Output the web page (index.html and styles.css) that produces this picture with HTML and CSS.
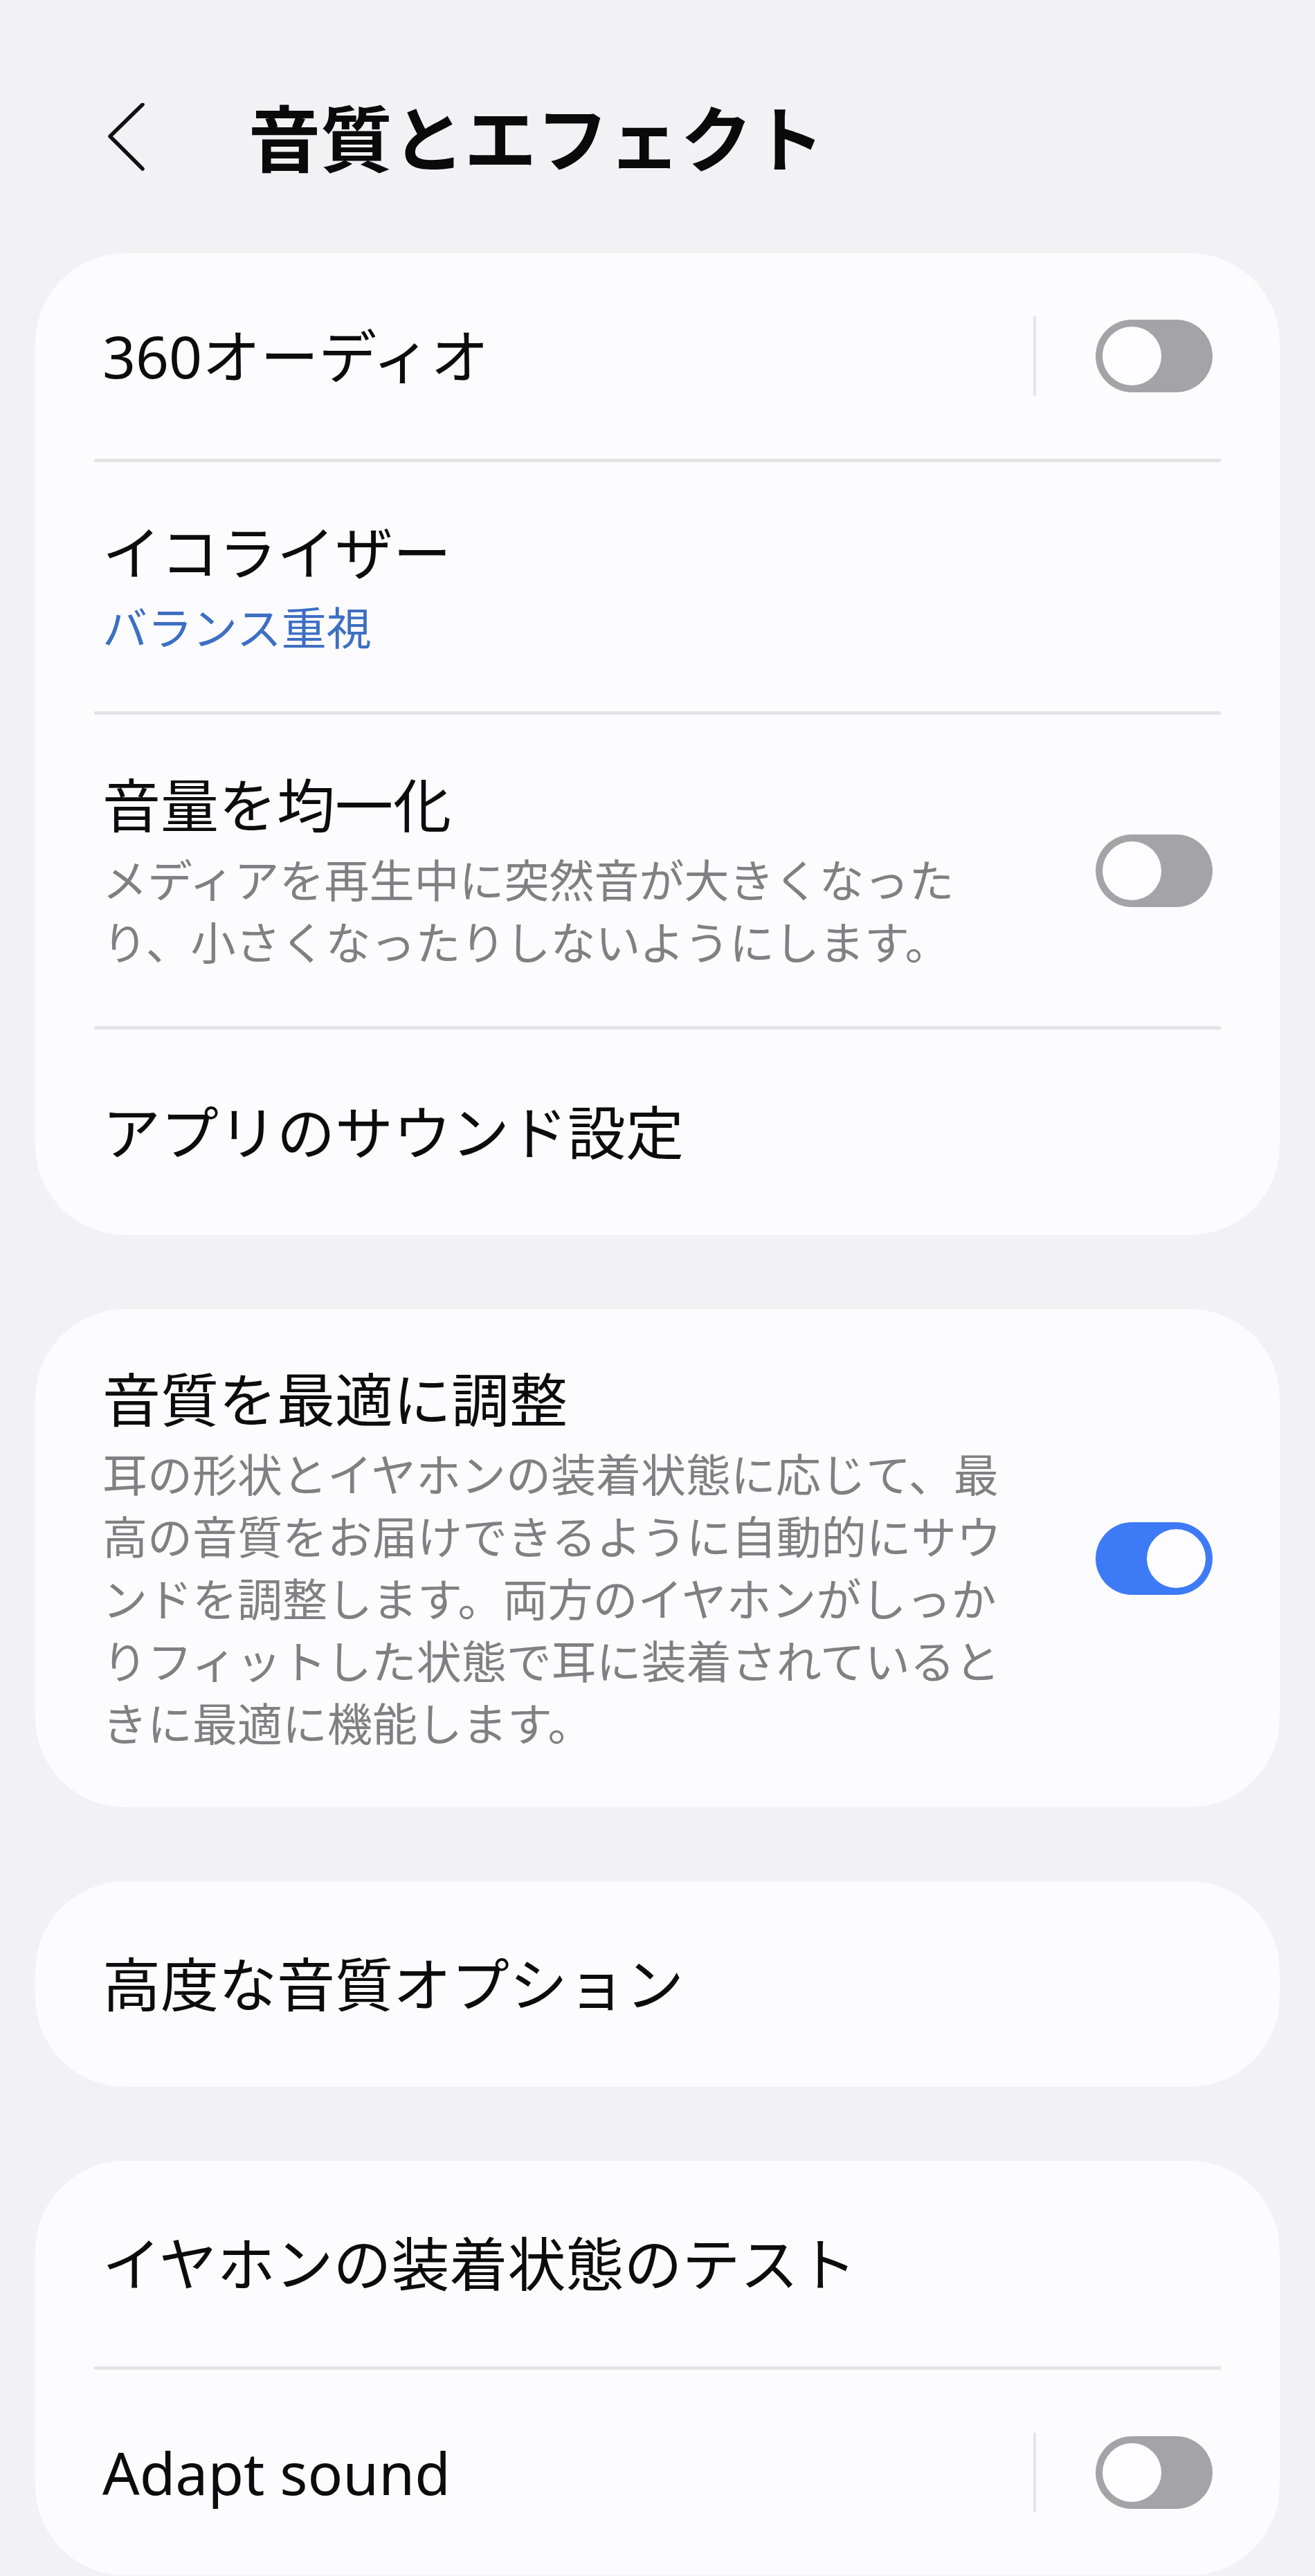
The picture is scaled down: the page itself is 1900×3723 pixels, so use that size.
FILE: index.html
```html
<!DOCTYPE html>
<html lang="ja">
<head>
<meta charset="utf-8">
<title>音質とエフェクト</title>
<link rel="stylesheet" href="styles.css">
</head>
<body>
<div class="page">
  <header class="appbar">
    <svg class="back" width="62" height="104" viewBox="0 0 62 104" aria-hidden="true">
      <path d="M54 2 L7 48 L54 95" fill="none" stroke="#111" stroke-width="5.5" stroke-linecap="round" stroke-linejoin="round"/>
    </svg>
    <h1 class="title">音質とエフェクト</h1>
  </header>

  <section class="card">
    <div class="row">
      <div class="text"><div class="label">360オーディオ</div></div>
      <div class="vdiv"></div>
      <div class="switch"><div class="knob"></div></div>
    </div>
    <div class="sep"></div>
    <div class="row">
      <div class="text">
        <div class="label">イコライザー</div>
        <div class="sub blue">バランス重視</div>
      </div>
    </div>
    <div class="sep"></div>
    <div class="row">
      <div class="text">
        <div class="label">音量を均一化</div>
        <div class="sub desc">メディアを再生中に突然音が大きくなったり、小さくなったりしないようにします。</div>
      </div>
      <div class="switch"><div class="knob"></div></div>
    </div>
    <div class="sep"></div>
    <div class="row">
      <div class="text"><div class="label">アプリのサウンド設定</div></div>
    </div>
  </section>

  <section class="card">
    <div class="row">
      <div class="text">
        <div class="label">音質を最適に調整</div>
        <div class="sub desc">耳の形状とイヤホンの装着状態に応じて、最高の音質をお届けできるように自動的にサウンドを調整します。両方のイヤホンがしっかりフィットした状態で耳に装着されているときに最適に機能します。</div>
      </div>
      <div class="switch on"><div class="knob"></div></div>
    </div>
  </section>

  <section class="card">
    <div class="row">
      <div class="text"><div class="label">高度な音質オプション</div></div>
    </div>
  </section>

  <section class="card">
    <div class="row">
      <div class="text"><div class="label">イヤホンの装着状態のテスト</div></div>
    </div>
    <div class="sep"></div>
    <div class="row">
      <div class="text"><div class="label">Adapt sound</div></div>
      <div class="vdiv"></div>
      <div class="switch"><div class="knob"></div></div>
    </div>
  </section>
</div>
</body>
</html>
```

FILE: styles.css
```css
html, body {
  margin: 0;
  padding: 0;
  background: #f2f2f4;
}

body {
  font-family: "Noto Sans", "Noto Sans CJK JP", sans-serif;
  color: #111;
}

.page {
  width: 1900px;
  display: flex;
  flex-direction: column;
  gap: 107px;
  padding: 0 51px;
  box-sizing: border-box;
}

.appbar {
  height: 366px;
  margin-bottom: -107px;
  padding-top: 36px;
  box-sizing: border-box;
  display: flex;
  align-items: center;
}

.back {
  margin-left: 101px;
  flex: none;
}

.title {
  margin: 0 0 0 145px;
  font-size: 104px;
  font-weight: 700;
  line-height: 130px;
  color: #0a0a0a;
}

.card {
  background: #fcfcfe;
  border-radius: 130px;
  display: flex;
  flex-direction: column;
  overflow: hidden;
}

.row {
  display: flex;
  align-items: center;
  min-height: 297px;
  padding: 76px 97px 76px 97px;
  box-sizing: border-box;
}

.text {
  flex: 1;
  min-width: 0;
}

.label {
  font-size: 84px;
  line-height: 110px;
  color: #0c0c0c;
}

.sub {
  margin-top: 8px;
  font-size: 65px;
  line-height: 90px;
}

.blue {
  color: #3d6fc3;
}

.desc {
  color: #808084;
  max-width: 1330px;
}

.sep {
  height: 5px;
  margin: 0 85px;
  background: #e4e4e6;
}

.vdiv {
  width: 4px;
  height: 115px;
  background: #e4e4e6;
  margin-right: 86px;
  flex: none;
}

.switch {
  flex: none;
  width: 169px;
  height: 105px;
  border-radius: 53px;
  background: #a4a4a8;
  padding: 10px;
  box-sizing: border-box;
  display: flex;
  justify-content: flex-start;
}

.switch.on {
  background: #3d7bf6;
  justify-content: flex-end;
}

.knob {
  width: 85px;
  height: 85px;
  border-radius: 50%;
  background: #fdfdff;
}
```
